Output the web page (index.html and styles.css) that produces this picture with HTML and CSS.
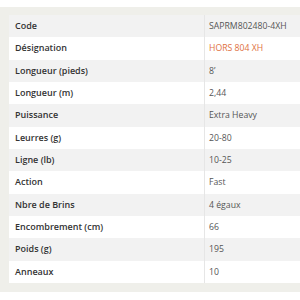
FILE: index.html
```html
<!DOCTYPE html>
<html>
<head>
<meta charset="utf-8">
<link rel="stylesheet" href="styles.css">
</head>
<body>
<div class="panel">
  <table class="specs">
    <tr><th>Code</th><td>SAPRM802480-4XH</td></tr>
    <tr><th>Désignation</th><td class="accent">HORS 804 XH</td></tr>
    <tr><th>Longueur (pieds)</th><td>8’</td></tr>
    <tr><th>Longueur (m)</th><td>2,44</td></tr>
    <tr><th>Puissance</th><td>Extra Heavy</td></tr>
    <tr><th>Leurres (g)</th><td>20-80</td></tr>
    <tr><th>Ligne (lb)</th><td>10-25</td></tr>
    <tr><th>Action</th><td>Fast</td></tr>
    <tr><th>Nbre de Brins</th><td>4 égaux</td></tr>
    <tr><th>Encombrement (cm)</th><td>66</td></tr>
    <tr><th>Poids (g)</th><td>195</td></tr>
    <tr><th>Anneaux</th><td>10</td></tr>
  </table>
</div>
</body>
</html>
```
FILE: styles.css
```css
html, body {
  margin: 0;
  padding: 0;
  background: #ffffff;
}
body {
  padding-top: 7px;
  font-family: "Open Sans", "Liberation Sans", sans-serif;
}
.panel {
  background: #efefea;
  padding: 8px 0 9px 9px;
  height: 268px;
}
.specs {
  width: 100%;
  border-collapse: collapse;
}
.specs tr {
  height: 22.33px;
}
.specs tr:nth-child(odd) {
  background: #f2f2f2;
}
.specs tr:nth-child(even) {
  background: #ffffff;
}
.specs th, .specs td {
  padding: 0 0 0 6px;
  text-align: left;
  vertical-align: middle;
  line-height: 12px;
}
.specs th {
  width: 189px;
  font-size: 9px;
  font-weight: 600;
  color: #333333;
  border-right: 1px solid #e6e6e6;
}
.specs td {
  font-size: 8.7px;
  font-weight: 400;
  color: #555555;
  padding-left: 4px;
}
.specs td.accent {
  color: #e0703e;
}
```
